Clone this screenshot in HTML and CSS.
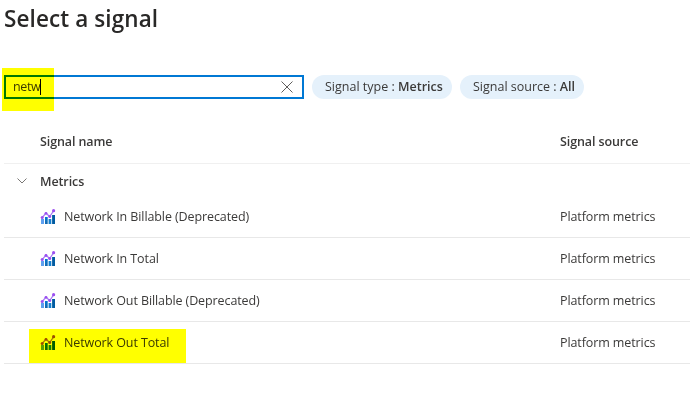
FILE: index.html
```html
<!DOCTYPE html>
<html lang="en">
<head>
<meta charset="utf-8">
<title>Select a signal</title>
<link rel="stylesheet" href="styles.css">
</head>
<body>
<svg class="defs" width="0" height="0" aria-hidden="true">
  <defs>
    <linearGradient id="bar" x1="0" y1="0" x2="0" y2="1"><stop offset="0" stop-color="#0078d4"/><stop offset="1" stop-color="#1668ac"/></linearGradient>
    <symbol id="metrics" viewBox="0 0 16 16">
      <path fill="#5ea0ef" d="M1 10h3v5H1z"/>
      <path fill="url(#bar)" d="M5 8h2.700v7H5z"/>
      <path fill="#1480d0" d="M8.600 10h2.700v5H8.600z"/>
      <path fill="#005ba1" d="M12.100 6H15v9h-2.900z"/>
      <path fill="none" stroke="#a67af4" stroke-width="1.200" d="M2.200 8.500 6 4.200l3.700 3.300L13.600 1.800"/>
      <g fill="#9b4ff0"><circle cx="2.200" cy="8.500" r="1.500"/><circle cx="6" cy="4.300" r="1.400"/><circle cx="9.700" cy="7.400" r="1.500"/><circle cx="13.600" cy="1.700" r="1.600"/></g>
    </symbol>
  </defs>
</svg>
<main class="panel">
  <h1 class="title"><span>Select a signal</span></h1>
  <div class="filters">
    <div class="search"><span class="query">netw</span><span class="caret"></span>
      <svg class="clear" viewBox="0 0 12 12"><path d="M.5.5l11 11M11.500.5l-11 11"/></svg>
      <i class="mark mark-search"></i>
    </div>
    <div class="pill pill-type"><span>Signal type : <b>Metrics</b></span></div>
    <div class="pill pill-source"><span>Signal source : <b>All</b></span></div>
  </div>
  <div class="row head"><span class="name">Signal name</span><span>Signal source</span></div>
  <div class="group"><svg class="chevron" viewBox="0 0 10 6"><path d="M.5.5 5 5 9.500.5"/></svg><span>Metrics</span></div>
  <div class="row"><span class="name"><svg class="icon"><use href="#metrics"/></svg><span>Network In Billable (Deprecated)</span></span><span>Platform metrics</span></div>
  <div class="row"><span class="name"><svg class="icon"><use href="#metrics"/></svg><span>Network In Total</span></span><span>Platform metrics</span></div>
  <div class="row"><span class="name"><svg class="icon"><use href="#metrics"/></svg><span>Network Out Billable (Deprecated)</span></span><span>Platform metrics</span></div>
  <div class="row"><span class="name"><svg class="icon"><use href="#metrics"/></svg><span>Network Out Total</span></span><span>Platform metrics</span><i class="mark mark-row"></i></div>
</main>
</body>
</html>
```
FILE: styles.css
```css
* { box-sizing: border-box; }
body {
  margin: 0;
  background: #fff;
  color: #3b3a39;
  font: 12.5px/20px "Segoe UI", "Open Sans", "Noto Sans", sans-serif;
  letter-spacing: -0.1px;
  white-space: nowrap;
  overflow: hidden;
}
.defs { position: absolute; }
.panel { padding-left: 4px; }
.title {
  margin: 0;
  height: 75px;
  padding-top: 3px;
  font-size: 22.5px;
  line-height: 32px;
  font-weight: 600;
  letter-spacing: 0.1px;
  color: #292827;
}
.filters { display: flex; gap: 8px; height: 46px; align-items: flex-start; }
.search {
  position: relative;
  display: flex;
  align-items: center;
  width: 300px;
  height: 24px;
  padding: 0 9px 0 7px;
  border: 2px solid #0078d4;
}
.query { letter-spacing: -0.4px; }
.caret { width: 1px; height: 16px; background: #000; }
.clear { width: 12px; height: 12px; margin-left: auto; }
.clear path { fill: none; stroke: #605e5c; stroke-width: 1; }
.pill {
  height: 24px;
  padding-left: 13px;
  border-radius: 12px;
  background: #e5f1fb;
  line-height: 24px;
  letter-spacing: 0;
}
.pill-type { width: 140px; }
.pill-source { width: 124px; }
.pill b { font-weight: 600; }
.row {
  position: relative;
  display: grid;
  grid-template-columns: 556px 1fr;
  align-items: center;
  height: 42px;
  border-bottom: 1px solid #e8e8e8;
}
.name { display: flex; align-items: center; gap: 8px; padding-left: 36px; }
.icon { width: 16px; height: 16px; }
.head { height: 43px; font-weight: 600; border-color: #f0f0f0; }
.group {
  display: flex;
  align-items: center;
  gap: 13px;
  height: 32px;
  padding: 3px 0 0 13px;
  font-weight: 600;
}
.chevron { width: 10px; height: 6px; margin-top: -2px; }
.chevron path { fill: none; stroke: #797775; stroke-width: 1; }
.mark { position: absolute; background: #ff0; mix-blend-mode: multiply; }
.mark-search { left: -4px; top: -9px; width: 52px; height: 43px; }
.mark-row { left: 25px; top: 7px; width: 157px; height: 34px; }
```
